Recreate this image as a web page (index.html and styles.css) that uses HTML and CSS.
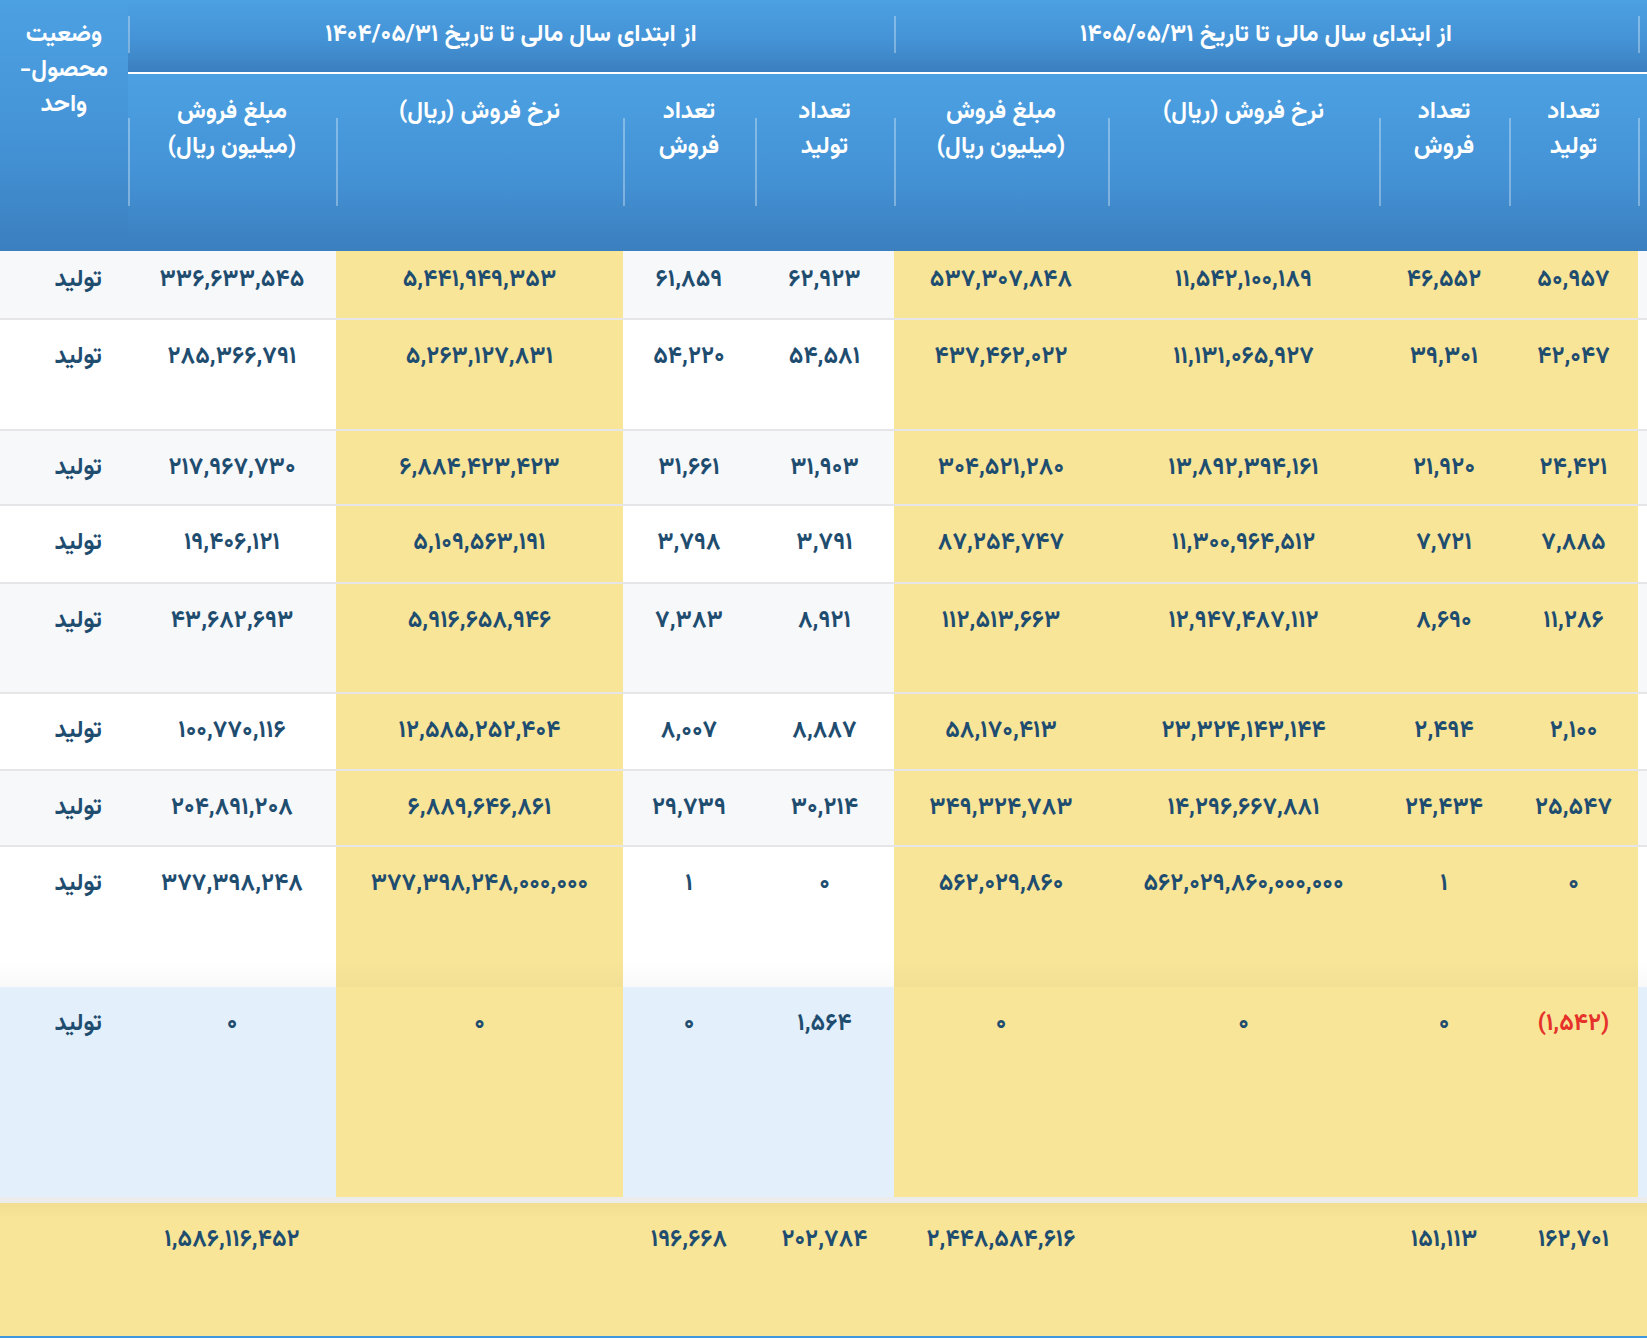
FILE: index.html
```html
<!DOCTYPE html>
<html lang="fa" dir="rtl">
<head>
<meta charset="utf-8">
<title>گزارش تولید و فروش</title>
<link rel="stylesheet" href="styles.css">
</head>
<body>
<table class="report">
  <colgroup>
    <col class="w-c0"><col class="w-c1"><col class="w-c2"><col class="w-c3"><col class="w-c4">
    <col class="w-c5"><col class="w-c6"><col class="w-c7"><col class="w-c8"><col class="w-c9">
  </colgroup>
  <thead>
    <tr class="head-top">
      <th class="sep-top group"></th>
      <th class="sep-top group" colspan="4">از ابتدای سال مالی تا تاریخ ۱۴۰۵/۰۵/۳۱</th>
      <th class="sep-top group" colspan="4">از ابتدای سال مالی تا تاریخ ۱۴۰۴/۰۵/۳۱</th>
      <th class="status-head" rowspan="2">وضعیت<br>محصول-<br>واحد</th>
    </tr>
    <tr class="head-cols">
      <th class="sep-col"></th>
      <th class="sep-col">تعداد<br>تولید</th>
      <th class="sep-col">تعداد<br>فروش</th>
      <th class="sep-col">نرخ فروش (ریال)</th>
      <th class="sep-col">مبلغ فروش<br>(میلیون ریال)</th>
      <th class="sep-col">تعداد<br>تولید</th>
      <th class="sep-col">تعداد<br>فروش</th>
      <th class="sep-col">نرخ فروش (ریال)</th>
      <th class="sep-col">مبلغ فروش<br>(میلیون ریال)</th>
    </tr>
  </thead>
  <tbody>
    <tr class="odd first h69">
      <td></td><td class="hl">۵۰,۹۵۷</td><td class="hl">۴۶,۵۵۲</td><td class="hl">۱۱,۵۴۲,۱۰۰,۱۸۹</td><td class="hl">۵۳۷,۳۰۷,۸۴۸</td>
      <td>۶۲,۹۲۳</td><td>۶۱,۸۵۹</td><td class="hl">۵,۴۴۱,۹۴۹,۳۵۳</td><td>۳۳۶,۶۳۳,۵۴۵</td><td class="status">تولید</td>
    </tr>
    <tr class="even h111">
      <td></td><td class="hl">۴۲,۰۴۷</td><td class="hl">۳۹,۳۰۱</td><td class="hl">۱۱,۱۳۱,۰۶۵,۹۲۷</td><td class="hl">۴۳۷,۴۶۲,۰۲۲</td>
      <td>۵۴,۵۸۱</td><td>۵۴,۲۲۰</td><td class="hl">۵,۲۶۳,۱۲۷,۸۳۱</td><td>۲۸۵,۳۶۶,۷۹۱</td><td class="status">تولید</td>
    </tr>
    <tr class="odd h75">
      <td></td><td class="hl">۲۴,۴۲۱</td><td class="hl">۲۱,۹۲۰</td><td class="hl">۱۳,۸۹۲,۳۹۴,۱۶۱</td><td class="hl">۳۰۴,۵۲۱,۲۸۰</td>
      <td>۳۱,۹۰۳</td><td>۳۱,۶۶۱</td><td class="hl">۶,۸۸۴,۴۲۳,۴۲۳</td><td>۲۱۷,۹۶۷,۷۳۰</td><td class="status">تولید</td>
    </tr>
    <tr class="even h78">
      <td></td><td class="hl">۷,۸۸۵</td><td class="hl">۷,۷۲۱</td><td class="hl">۱۱,۳۰۰,۹۶۴,۵۱۲</td><td class="hl">۸۷,۲۵۴,۷۴۷</td>
      <td>۳,۷۹۱</td><td>۳,۷۹۸</td><td class="hl">۵,۱۰۹,۵۶۳,۱۹۱</td><td>۱۹,۴۰۶,۱۲۱</td><td class="status">تولید</td>
    </tr>
    <tr class="odd h110">
      <td></td><td class="hl">۱۱,۲۸۶</td><td class="hl">۸,۶۹۰</td><td class="hl">۱۲,۹۴۷,۴۸۷,۱۱۲</td><td class="hl">۱۱۲,۵۱۳,۶۶۳</td>
      <td>۸,۹۲۱</td><td>۷,۳۸۳</td><td class="hl">۵,۹۱۶,۶۵۸,۹۴۶</td><td>۴۳,۶۸۲,۶۹۳</td><td class="status">تولید</td>
    </tr>
    <tr class="even h77">
      <td></td><td class="hl">۲,۱۰۰</td><td class="hl">۲,۴۹۴</td><td class="hl">۲۳,۳۲۴,۱۴۳,۱۴۴</td><td class="hl">۵۸,۱۷۰,۴۱۳</td>
      <td>۸,۸۸۷</td><td>۸,۰۰۷</td><td class="hl">۱۲,۵۸۵,۲۵۲,۴۰۴</td><td>۱۰۰,۷۷۰,۱۱۶</td><td class="status">تولید</td>
    </tr>
    <tr class="odd h76">
      <td></td><td class="hl">۲۵,۵۴۷</td><td class="hl">۲۴,۴۳۴</td><td class="hl">۱۴,۲۹۶,۶۶۷,۸۸۱</td><td class="hl">۳۴۹,۳۲۴,۷۸۳</td>
      <td>۳۰,۲۱۴</td><td>۲۹,۷۳۹</td><td class="hl">۶,۸۸۹,۶۴۶,۸۶۱</td><td>۲۰۴,۸۹۱,۲۰۸</td><td class="status">تولید</td>
    </tr>
    <tr class="even h140 shade-bottom">
      <td></td><td class="hl">۰</td><td class="hl">۱</td><td class="hl">۵۶۲,۰۲۹,۸۶۰,۰۰۰,۰۰۰</td><td class="hl">۵۶۲,۰۲۹,۸۶۰</td>
      <td>۰</td><td>۱</td><td class="hl">۳۷۷,۳۹۸,۲۴۸,۰۰۰,۰۰۰</td><td>۳۷۷,۳۹۸,۲۴۸</td><td class="status">تولید</td>
    </tr>
    <tr class="active h210">
      <td></td><td class="hl negative">(۱,۵۴۲)</td><td class="hl">۰</td><td class="hl">۰</td><td class="hl">۰</td>
      <td>۱,۵۶۴</td><td>۰</td><td class="hl">۰</td><td>۰</td><td class="status">تولید</td>
    </tr>
  </tbody>
  <tfoot>
    <tr class="total">
      <td></td><td>۱۶۲,۷۰۱</td><td>۱۵۱,۱۱۳</td><td></td><td>۲,۴۴۸,۵۸۴,۶۱۶</td>
      <td>۲۰۲,۷۸۴</td><td>۱۹۶,۶۶۸</td><td></td><td>۱,۵۸۶,۱۱۶,۴۵۲</td><td></td>
    </tr>
  </tfoot>
</table>
</body>
</html>
```
FILE: styles.css
```css
html, body {
  margin: 0;
  padding: 0;
  background: #ffffff;
}

body {
  font-family: "Vazirmatn", "Noto Sans Arabic", "DejaVu Sans", sans-serif;
  overflow: hidden;
}

.report {
  width: 1647px;
  table-layout: fixed;
  border-collapse: separate;
  border-spacing: 0;
  direction: rtl;
  font-weight: bold;
  font-size: 24px;
  line-height: 35px;
}

.w-c0 { width: 9px; }
.w-c1 { width: 129px; }
.w-c2 { width: 130px; }
.w-c3 { width: 271px; }
.w-c4 { width: 214px; }
.w-c5 { width: 139px; }
.w-c6 { width: 132px; }
.w-c7 { width: 287px; }
.w-c8 { width: 208px; }
.w-c9 { width: 128px; }

/* ---------- header ---------- */
.report th {
  position: relative;
  color: #ffffff;
  font-weight: bold;
  font-size: 24px;
  text-align: center;
  vertical-align: top;
  padding: 0;
  background: linear-gradient(to bottom, #4ca1e2 0%, #4493d6 55%, #3b7fbf 100%);
  overflow: hidden;
  white-space: nowrap;
}

.head-top { height: 74px; }
.head-top th.group {
  border-bottom: 2px solid #ffffff;
  padding-top: 18px;
  height: 54px;
}

.head-cols { height: 177px; }
.head-cols th {
  padding-top: 21px;
}

.status-head {
  padding-top: 18px !important;
}

.sep-top::before,
.sep-col::before {
  content: "";
  position: absolute;
  left: 0;
  width: 2px;
  background: rgba(255, 255, 255, 0.32);
}
.sep-top::before { top: 16px; height: 37px; }
.sep-col::before { top: 44px; height: 88px; }

/* ---------- body ---------- */
.report td {
  color: #1f4d70;
  text-align: center;
  vertical-align: top;
  padding: 20px 0 0 0;
  border-bottom: 2px solid #e6e6e8;
  white-space: nowrap;
}

.report tr.first td { padding-top: 12px; }

.odd { background: #f7f8fa; }
.even { background: #ffffff; }
.active { background: #e3f0fb; }

.report td.hl { background-color: #f8e598; }

.report td.status {
  text-align: right;
  padding-right: 26px;
}

.report td.negative { color: #e5322a; }

.h69 { height: 69px; }
.h111 { height: 111px; }
.h75 { height: 75px; }
.h78 { height: 78px; }
.h110 { height: 110px; }
.h77 { height: 77px; }
.h76 { height: 76px; }
.h140 { height: 140px; }
.h210 { height: 210px; }

.shade-bottom td {
  border-bottom: 0;
  background-image: linear-gradient(to bottom, rgba(0, 0, 0, 0) calc(100% - 28px), rgba(0, 0, 0, 0.025) 100%);
}

.active td { border-bottom: 0; }

/* ---------- totals ---------- */
.total { height: 141px; }
.report .total td {
  background-color: #f8e598;
  background-image: linear-gradient(to bottom, rgba(160, 130, 40, 0.07) 0, rgba(160, 130, 40, 0) 14px);
  border-top: 6px solid #ececec;
  border-bottom: 2px solid #3f97dd;
  padding-top: 20px;
}
```
